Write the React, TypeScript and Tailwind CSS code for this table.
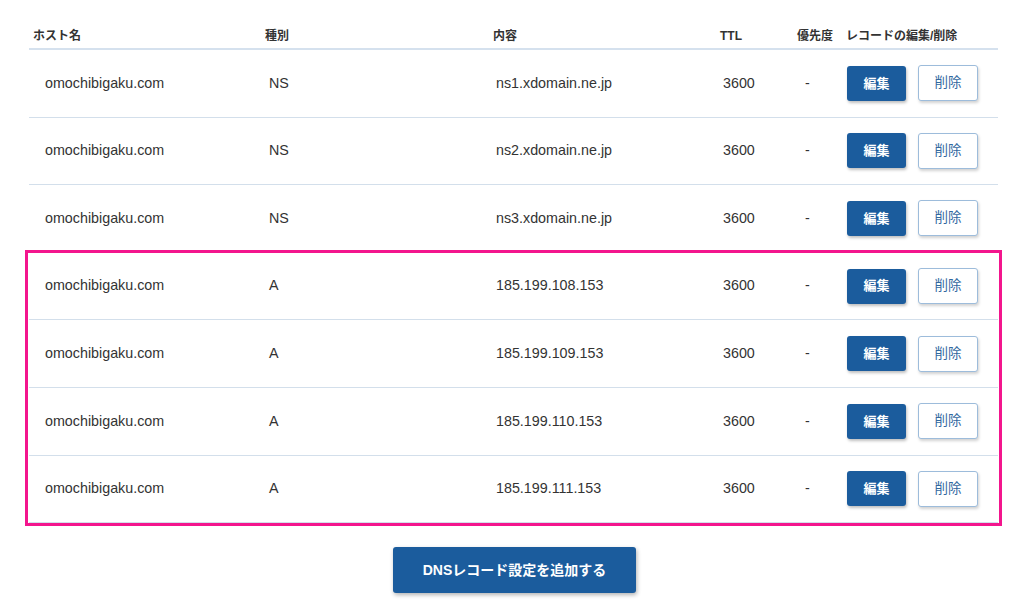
import React from 'react';

type DnsRecord = {
  host: string;
  type: string;
  content: string;
  ttl: number;
};

const records: DnsRecord[] = [
  { host: 'omochibigaku.com', type: 'NS', content: 'ns1.xdomain.ne.jp', ttl: 3600 },
  { host: 'omochibigaku.com', type: 'NS', content: 'ns2.xdomain.ne.jp', ttl: 3600 },
  { host: 'omochibigaku.com', type: 'NS', content: 'ns3.xdomain.ne.jp', ttl: 3600 },
  { host: 'omochibigaku.com', type: 'A', content: '185.199.108.153', ttl: 3600 },
  { host: 'omochibigaku.com', type: 'A', content: '185.199.109.153', ttl: 3600 },
  { host: 'omochibigaku.com', type: 'A', content: '185.199.110.153', ttl: 3600 },
  { host: 'omochibigaku.com', type: 'A', content: '185.199.111.153', ttl: 3600 },
];

const cols = 'grid grid-cols-[232px_228px_227px_78px_49px_155px]';

const RecordRow = ({ record }: { record: DnsRecord }) => (
  <div className={`${cols} h-[67.6px] items-center border-b border-[#d3dfeb] text-[14.3px] text-[#333]`}>
    <span className="pl-[16px]">{record.host}</span>
    <span className="pl-[8px]">{record.type}</span>
    <span className="pl-[7px]">{record.content}</span>
    <span className="pl-[7px]">{record.ttl}</span>
    <span className="pl-[11px]">-</span>
    <div className="flex items-center gap-[12px] pl-[4px]">
      <button className="h-[35px] w-[59px] rounded-[3px] bg-[#1b5c9d] text-[13px] font-bold text-white shadow-[1px_2px_3px_rgba(0,0,0,0.25)]">
        編集
      </button>
      <button className="h-[36px] w-[60px] rounded-[3px] border border-[#9dbcdb] bg-white text-[13.5px] text-[#33689f] shadow-[1px_2px_3px_rgba(0,0,0,0.18)]">
        削除
      </button>
    </div>
  </div>
);

export default function App() {
  const headers = ['ホスト名', '種別', '内容', 'TTL', '優先度', 'レコードの編集/削除'];
  const pads = ['pl-[4px]', 'pl-[4px]', 'pl-[4px]', 'pl-[4px]', 'pl-[3px]', 'pl-[3px]'];

  return (
    <div
      className="min-h-[614px] w-[1024px] bg-white"
      style={{ fontFamily: '"Liberation Sans", "Noto Sans CJK JP", sans-serif' }}
    >
      <div className="ml-[29px] w-[969px]">
        <div className={`${cols} h-[50px] items-end border-b-2 border-[#d5e1ee] pb-[3px] text-[12px] font-bold text-[#333]`}>
          {headers.map((h, i) => (
            <span key={h} className={pads[i]}>
              {h}
            </span>
          ))}
        </div>

        {records.slice(0, 3).map((r, i) => (
          <RecordRow key={i} record={r} />
        ))}

        <div className="-ml-px w-[971px] outline-[3px] outline-solid outline-[#f3158d]">
          <div className="ml-px w-[969px]">
            {records.slice(3).map((r, i) => (
              <RecordRow key={i} record={r} />
            ))}
          </div>
        </div>

        <div className="flex justify-center pt-[24px] pl-[2px]">
          <button className="h-[46px] w-[243px] rounded-[3px] bg-[#1b5c9d] text-[14px] font-bold text-white shadow-[1px_2px_4px_rgba(0,0,0,0.3)]">
            DNSレコード設定を追加する
          </button>
        </div>
      </div>
    </div>
  );
}
